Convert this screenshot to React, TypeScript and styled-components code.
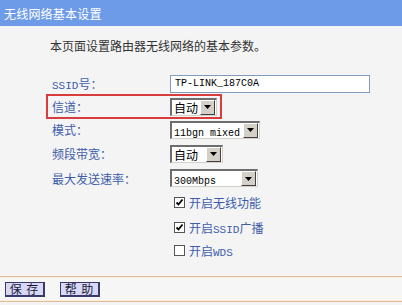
import React from "react";
import styled, { createGlobalStyle } from "styled-components";

// --- CONSTANTS ---
const LABEL_COL = "118px";
const LABEL_BLUE = "#3d5cab";
const ROW_HEIGHTS = [23, 23, 23, 25, 24, 25, 24, 23];

const GlobalStyle = createGlobalStyle`
  html, body {
    margin: 0;
    padding: 0;
    background: #f4f4f4;
  }
  body {
    font-family: "Noto Sans CJK SC", "Liberation Sans", sans-serif;
    font-size: 12px;
  }
`;

// --- LAYOUT ---
const Page = styled.div`
  width: 402px;
  height: 305px;
  overflow: hidden;
  background: #f4f4f4;
  display: flex;
  flex-direction: column;
`;
const TitleBar = styled.div`
  height: 26px;
  flex-shrink: 0;
  background: #6d9be8;
  color: #ffffff;
  display: flex;
  align-items: center;
  padding-left: 4px;
  font-size: 12px;
  letter-spacing: 0.2px;
`;
const Intro = styled.div`
  margin-top: 12px;
  padding-left: 50px;
  height: 16px;
  line-height: 16px;
  color: #333333;
  font-size: 12px;
`;
const Form = styled.div`
  margin-top: 18px;
  padding-left: 52px;
  display: flex;
  flex-direction: column;
`;
const Row = styled.div<{ $h: number }>`
  position: relative;
  height: ${(p) => p.$h}px;
  display: grid;
  grid-template-columns: ${LABEL_COL} 1fr;
  align-items: center;
`;
const Label = styled.span`
  color: ${LABEL_BLUE};
  font-size: 12px;
  white-space: nowrap;
`;
const Lat = styled.span<{ $size?: number }>`
  font-family: "Liberation Mono", monospace;
  font-size: ${(p) => p.$size || 10}px;
`;
const Highlight = styled.div`
  position: absolute;
  left: -6px;
  top: -1px;
  width: 176px;
  height: 25px;
  box-sizing: border-box;
  border: 2px solid #d83c3c;
  pointer-events: none;
`;

// --- CONTROLS ---
const TextInput = styled.div`
  width: 200px;
  height: 18px;
  box-sizing: border-box;
  border: 1px solid #7f9db9;
  background: #ffffff;
  display: flex;
  align-items: center;
  padding-left: 4px;
  font-family: "Liberation Mono", monospace;
  font-size: 10px;
  color: #000000;
`;
const SelectBox = styled.div<{ $w: number }>`
  width: ${(p) => p.$w}px;
  height: 18px;
  box-sizing: border-box;
  border-top: 2px solid #6e6e6e;
  border-left: 2px solid #6e6e6e;
  border-right: 1px solid #d4d0c8;
  border-bottom: 1px solid #d4d0c8;
  background: #ffffff;
  display: flex;
  align-items: center;
`;
const SelectText = styled.span`
  flex: 1;
  padding-left: 2px;
  color: #000000;
  white-space: nowrap;
  overflow: hidden;
`;
const ArrowBtn = styled.div`
  width: 15px;
  height: 15px;
  box-sizing: border-box;
  background: #d4d0c8;
  border-top: 1px solid #ffffff;
  border-left: 1px solid #ffffff;
  border-right: 1px solid #404040;
  border-bottom: 1px solid #404040;
  display: flex;
  align-items: center;
  justify-content: center;
  margin-right: 1px;
`;
const CheckRow = styled.div`
  display: flex;
  align-items: center;
  gap: 4px;
  margin-left: 4px;
  color: ${LABEL_BLUE};
`;
const CheckBox = styled.div`
  width: 11px;
  height: 11px;
  box-sizing: border-box;
  border: 1px solid #555555;
  background: #ffffff;
  display: flex;
  align-items: center;
  justify-content: center;
`;

// --- FOOTER ---
const Footer = styled.div`
  margin-top: 14px;
  height: 26px;
  box-sizing: border-box;
  border-top: 1px solid #e0bc98;
  border-bottom: 1px solid #e0bc98;
  box-shadow: inset 0 1px 0 #fcecdc, inset 0 -1px 0 #fcecdc;
  background: #f6f6f6;
  display: flex;
  align-items: center;
  gap: 15px;
  padding-left: 5px;
`;
const Button = styled.div`
  width: 40px;
  height: 15px;
  box-sizing: border-box;
  background: #d8d8f6;
  border: 1px solid #3a3a6a;
  border-right-width: 2px;
  border-bottom-width: 2px;
  display: flex;
  align-items: center;
  justify-content: center;
  font-size: 12px;
  color: #1a1a3a;
  letter-spacing: 1px;
  white-space: pre;
`;

const Arrow = () => (
  <ArrowBtn>
    <svg width="7" height="4" viewBox="0 0 7 4">
      <path d="M0 0h7L3.5 4z" fill="#000" />
    </svg>
  </ArrowBtn>
);

const Select: React.FC<{ w: number; children: React.ReactNode }> = ({ w, children }) => (
  <SelectBox $w={w}>
    <SelectText>{children}</SelectText>
    <Arrow />
  </SelectBox>
);

const Check: React.FC<{ on: boolean; children: React.ReactNode }> = ({ on, children }) => (
  <CheckRow>
    <CheckBox>
      {on && (
        <svg width="9" height="9" viewBox="0 0 9 9">
          <path d="M1.5 4.5l2 2 4-5" stroke="#000" strokeWidth="1.8" fill="none" />
        </svg>
      )}
    </CheckBox>
    <span>{children}</span>
  </CheckRow>
);

const App: React.FC = () => {
  return (
    <Page>
      <GlobalStyle />
      <TitleBar>无线网络基本设置</TitleBar>
      <Intro>本页面设置路由器无线网络的基本参数。</Intro>

      <Form>
        <Row $h={ROW_HEIGHTS[0]}>
          <Label>
            <Lat $size={11}>SSID</Lat>号：
          </Label>
          <TextInput>TP-LINK_187C0A</TextInput>
        </Row>
        <Row $h={ROW_HEIGHTS[1]}>
          <Highlight />
          <Label>信道：</Label>
          <Select w={47}>自动</Select>
        </Row>
        <Row $h={ROW_HEIGHTS[2]}>
          <Label>模式：</Label>
          <Select w={90}>
            <Lat>11bgn mixed</Lat>
          </Select>
        </Row>
        <Row $h={ROW_HEIGHTS[3]}>
          <Label>频段带宽：</Label>
          <Select w={53}>自动</Select>
        </Row>
        <Row $h={ROW_HEIGHTS[4]}>
          <Label>最大发送速率：</Label>
          <Select w={88}>
            <Lat>300Mbps</Lat>
          </Select>
        </Row>
        <Row $h={ROW_HEIGHTS[5]}>
          <span />
          <Check on>开启无线功能</Check>
        </Row>
        <Row $h={ROW_HEIGHTS[6]}>
          <span />
          <Check on>
            开启<Lat $size={11}>SSID</Lat>广播
          </Check>
        </Row>
        <Row $h={ROW_HEIGHTS[7]}>
          <span />
          <Check on={false}>
            开启<Lat $size={11}>WDS</Lat>
          </Check>
        </Row>
      </Form>

      <Footer>
        <Button>保 存</Button>
        <Button>帮 助</Button>
      </Footer>
    </Page>
  );
};

export default App;
